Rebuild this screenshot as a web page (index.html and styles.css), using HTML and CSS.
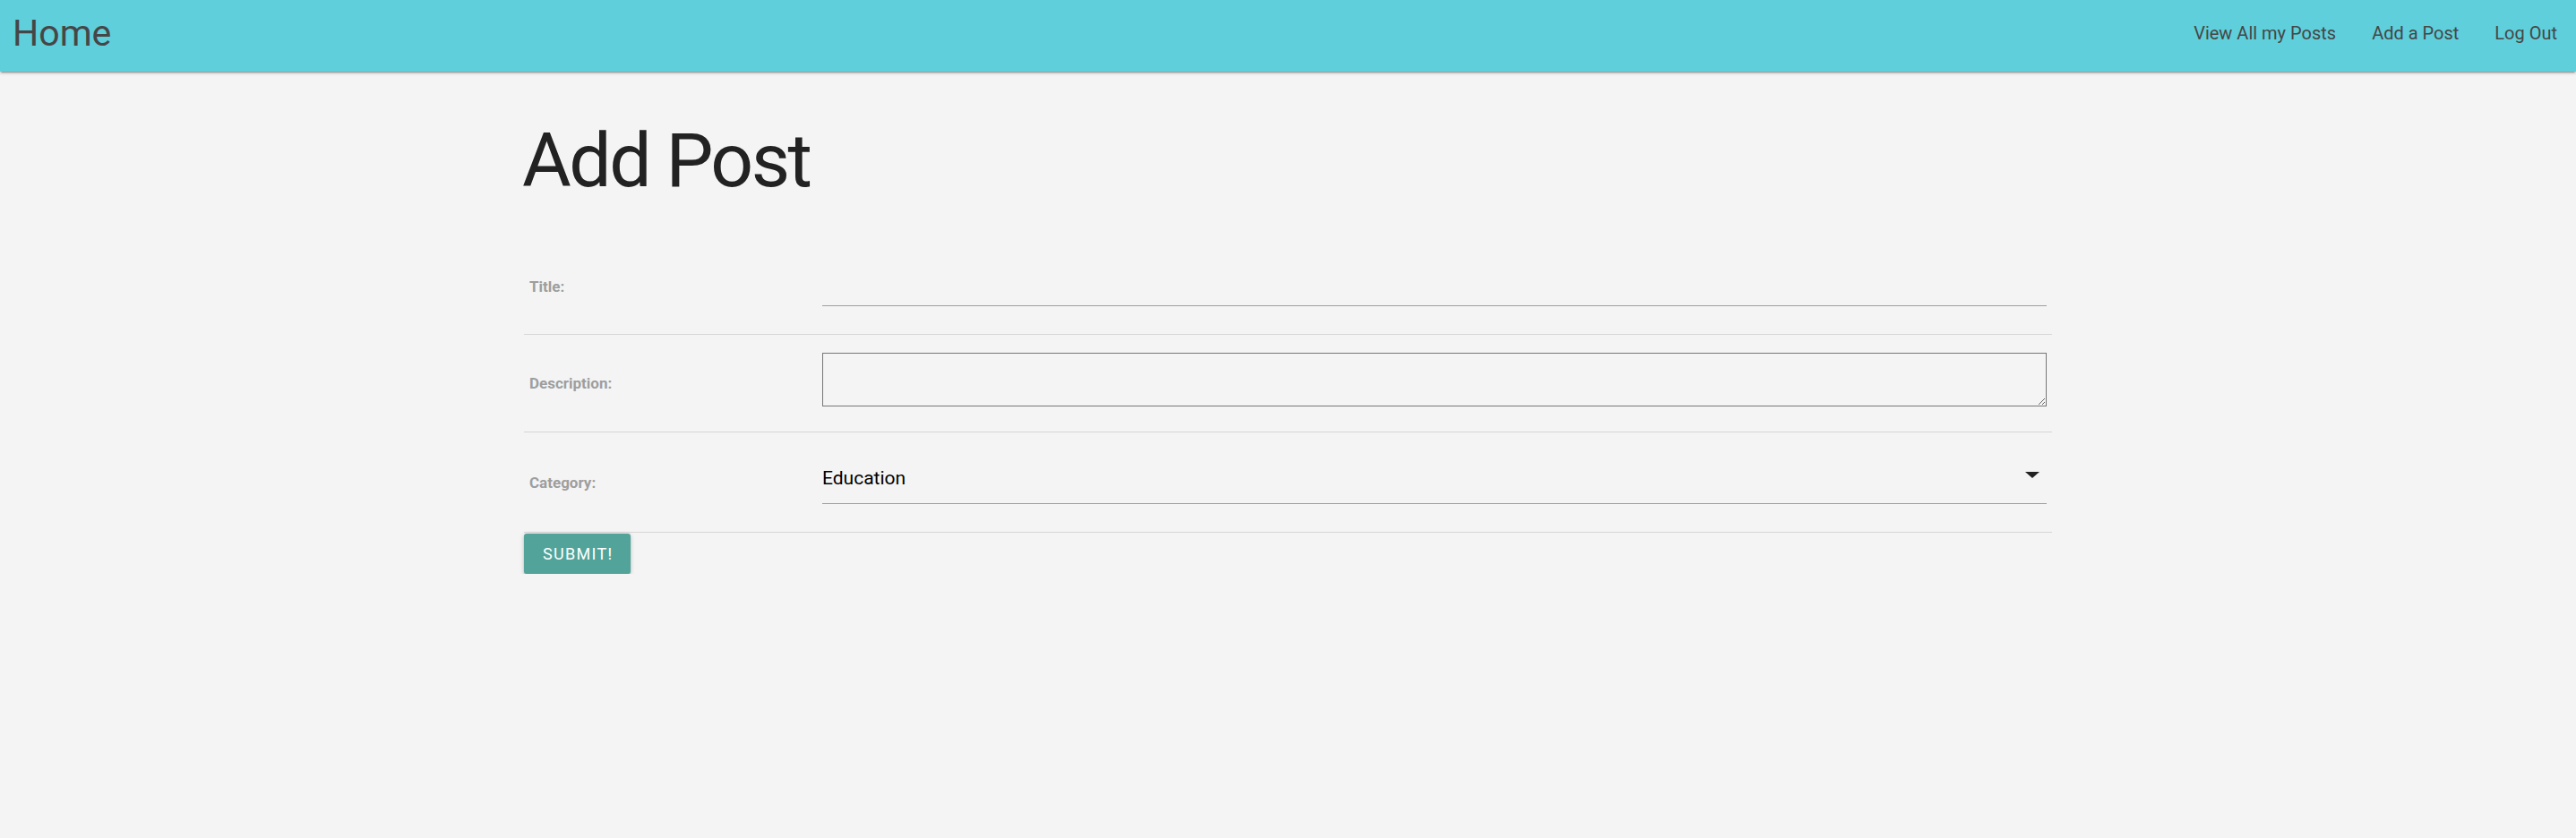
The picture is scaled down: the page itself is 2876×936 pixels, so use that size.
FILE: index.html
```html
<!DOCTYPE html>
<html lang="en">
<head>
<meta charset="utf-8">
<title>Add Post</title>
<link rel="stylesheet" href="styles.css">
</head>
<body>
<nav class="navbar">
  <a class="brand" href="#">Home</a>
  <ul class="nav-links">
    <li><a href="#">View All my Posts</a></li>
    <li><a href="#">Add a Post</a></li>
    <li><a href="#">Log Out</a></li>
  </ul>
</nav>
<main class="container">
  <h1 class="page-title">Add Post</h1>
  <form class="post-form">
    <div class="form-row">
      <label class="form-label" for="title">Title:</label>
      <div class="form-field">
        <input id="title" class="text-input" type="text">
      </div>
    </div>
    <div class="form-row">
      <label class="form-label" for="desc">Description:</label>
      <div class="form-field">
        <textarea id="desc" class="text-area"></textarea>
      </div>
    </div>
    <div class="form-row">
      <label class="form-label">Category:</label>
      <div class="form-field">
        <div class="select">
          <span class="select-value">Education</span>
          <span class="select-caret"></span>
        </div>
      </div>
    </div>
    <button type="button" class="submit-btn">SUBMIT!</button>
  </form>
</main>
</body>
</html>
```
FILE: styles.css
```css
* { box-sizing: border-box; }
html, body { margin: 0; padding: 0; }
body {
  background: #f4f4f4;
  font-family: Roboto, "Noto Sans", "Liberation Sans", sans-serif;
  color: #222;
}
.navbar {
  height: 80px;
  background: #5ecfdb;
  display: flex;
  justify-content: space-between;
  align-items: flex-start;
  box-shadow: 0 2px 2px 0 rgba(0,0,0,0.14), 0 1px 5px 0 rgba(0,0,0,0.12), 0 3px 1px -2px rgba(0,0,0,0.2);
}
.brand {
  font-size: 41px;
  line-height: 75px;
  color: #464646;
  text-decoration: none;
  padding-left: 14px;
}
.nav-links {
  list-style: none;
  margin: 0;
  padding: 0 1px 0 0;
  display: flex;
}
.nav-links a {
  display: block;
  padding: 0 20px;
  font-size: 20px;
  line-height: 74px;
  color: #464646;
  text-decoration: none;
}
.container {
  width: 1706px;
  margin: 0 auto;
}
.page-title {
  font-size: 84px;
  font-weight: 400;
  letter-spacing: -2.5px;
  line-height: 92px;
  margin: 54px 0 40px -2px;
  color: #222;
}
.form-row {
  display: grid;
  grid-template-columns: 327px 1fr;
  align-items: center;
  border-bottom: 1px solid #d6d6d6;
}
.form-label {
  padding: 0 6px;
  font-size: 17px;
  font-weight: 700;
  color: #9e9e9e;
}
.form-field {
  padding: 19px 6px;
}
.text-input {
  display: block;
  width: 100%;
  height: 57px;
  margin: 0 0 12px;
  border: none;
  border-bottom: 1px solid #9e9e9e;
  background: transparent;
  font: inherit;
  font-size: 20px;
  outline: none;
}
.text-area {
  display: block;
  width: 100%;
  height: 60px;
  margin: 1px 0 9px;
  border: 1px solid #767676;
  background: transparent;
  font: inherit;
  resize: vertical;
}
.select {
  height: 61px;
  margin-bottom: 12px;
  border-bottom: 1px solid #9e9e9e;
  display: flex;
  align-items: center;
  justify-content: space-between;
  padding-top: 3px;
}
.select-value {
  font-size: 21px;
  color: #000;
}
.select-caret {
  width: 0;
  height: 0;
  border-left: 8px solid transparent;
  border-right: 8px solid transparent;
  border-top: 7px solid #222;
  margin-right: 8px;
  margin-top: -6px;
}
.submit-btn {
  display: block;
  margin-top: 1px;
  height: 45px;
  padding: 0 20px 0 21px;
  background: #52a49a;
  color: #fff;
  border: none;
  border-radius: 3px;
  font-family: inherit;
  font-size: 18px;
  letter-spacing: 1.3px;
  box-shadow: 0 2px 2px 0 rgba(0,0,0,0.14), 0 3px 1px -2px rgba(0,0,0,0.12), 0 1px 5px 0 rgba(0,0,0,0.2);
}
```
